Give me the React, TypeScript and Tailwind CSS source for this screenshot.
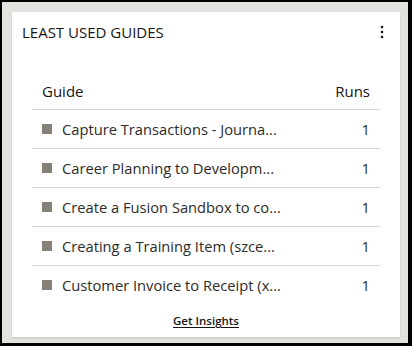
import React from "react";

const rows = [
  "Capture Transactions - Journa...",
  "Career Planning to Developm...",
  "Create a Fusion Sandbox to co...",
  "Creating a Training Item (szce...",
  "Customer Invoice to Receipt (x...",
];

export default function App() {
  return (
    <div
      className="w-[412px] h-[346px] box-border border-l-2 border-t-2 border-r-4 border-b-[3px] border-black bg-[#e4e2df] pl-[10px] pt-[10px] pr-[8px] pb-[6px]"
      style={{ fontFamily: '"Open Sans", "Noto Sans", sans-serif' }}
    >
      <div className="w-[388px] h-[325px] bg-white shadow-[0_1px_2px_rgba(0,0,0,0.15)] flex flex-col">
        <div className="flex items-center justify-between pl-[10px] pr-[16px] pt-[10px] h-[30px]">
          <div className="text-[15px] leading-[20px] text-[#161513]">LEAST USED GUIDES</div>
          <svg width="4" height="14" viewBox="0 0 4 14" className="text-[#161513]">
            <circle cx="2" cy="2" r="1.3" fill="currentColor" />
            <circle cx="2" cy="7" r="1.3" fill="currentColor" />
            <circle cx="2" cy="12" r="1.3" fill="currentColor" />
          </svg>
        </div>
        <div className="mx-[20px] mt-[30px]">
          <div className="h-[38px] flex items-center justify-between px-[10px] border-b border-[#d6d6d6] text-[15px] text-[#161513] pt-[2px]">
            <span>Guide</span>
            <span>Runs</span>
          </div>
          {rows.map((r, i) => (
            <div
              key={i}
              className={`h-[39px] flex items-center justify-between pl-[10px] pr-[10px] text-[14.7px] text-[#2d2c2a] ${i < rows.length - 1 ? "border-b border-[#d6d6d6]" : ""}`}
            >
              <div className="flex items-center">
                <span className="w-[10px] h-[10px] bg-[#858078] mr-[10px] inline-block" />
                <span>{r}</span>
              </div>
              <span>1</span>
            </div>
          ))}
        </div>
        <div className="mt-[8px] flex justify-center">
          <a className="text-[11.5px] leading-[16px] font-semibold text-[#161513] underline underline-offset-2">Get Insights</a>
        </div>
      </div>
    </div>
  );
}
